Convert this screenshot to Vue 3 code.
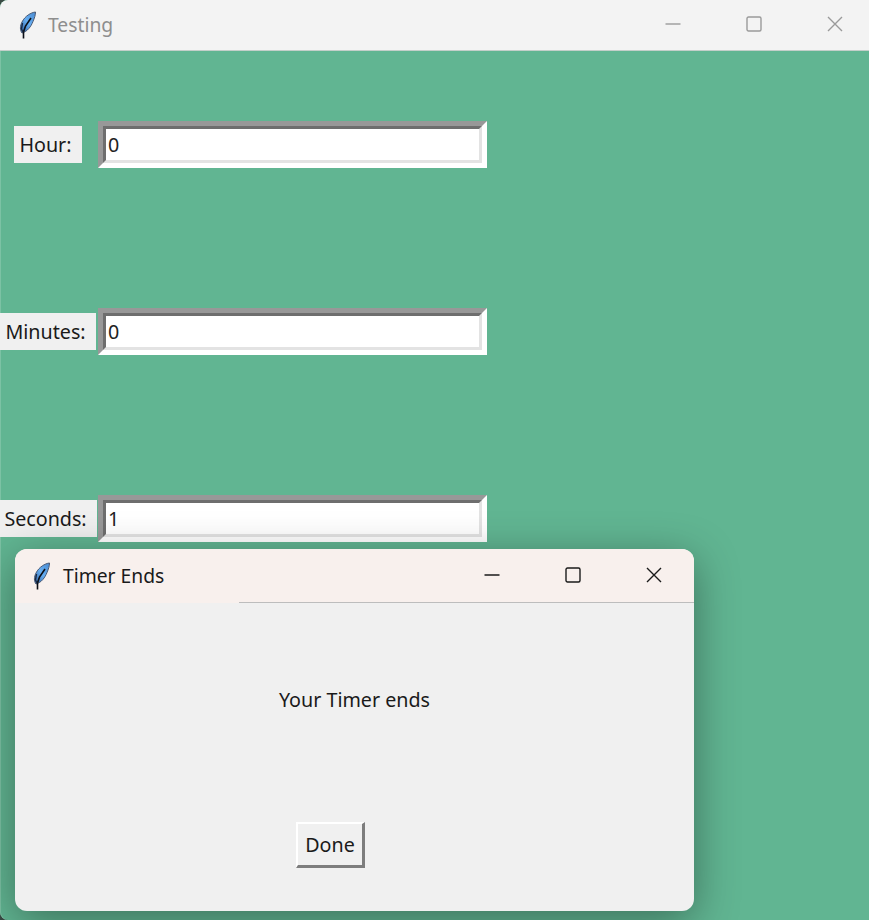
<script setup>
const rows = [
  { label: 'Hour:', value: '0' },
  { label: 'Minutes:', value: '0' },
  { label: 'Seconds:', value: '1' },
]
</script>

<template>
  <div class="screen">
    <svg width="0" height="0" class="defs">
      <defs>
        <linearGradient id="plume" x1="1" y1="0" x2="0" y2="1">
          <stop offset="0" stop-color="#4a8ad0" />
          <stop offset="0.5" stop-color="#66aef2" />
          <stop offset="1" stop-color="#2e5c9e" />
        </linearGradient>
      </defs>
    </svg>

    <section class="main">
      <header class="titlebar">
        <svg class="feather" viewBox="0 0 18 28">
          <path d="M16.500 1C12 1.500 6 5 3 11 1 15 .8 19 3 22 8.500 20.500 12 15.500 14 10.500 15.500 7 16.500 4 16.500 1Z" fill="url(#plume)" stroke="#4a5a75" stroke-width="1" />
          <path d="M12 7 6.500 15 4.500 21 4.500 27.500" fill="none" stroke="#0c0f16" stroke-width="1.600" />
          <path d="M3.500 12 2.500 18 4 21" fill="none" stroke="#1b2a44" stroke-width="1.400" />
        </svg>
        <span class="title muted">Testing</span>
        <div class="controls muted-icons">
          <svg viewBox="0 0 16 16"><path d="M0.500 8H15.500" /></svg>
          <svg viewBox="0 0 16 16"><rect x="1" y="1" width="14" height="14" rx="1.500" /></svg>
          <svg viewBox="0 0 16 16"><path d="M1 1 15 15M15 1 1 15" /></svg>
        </div>
      </header>

      <div class="form">
        <div v-for="row in rows" :key="row.label" class="row">
          <label class="field-label">{{ row.label }}</label>
          <div class="entry">
            <div class="entry-inner">{{ row.value }}</div>
          </div>
        </div>
      </div>
    </section>

    <section class="dialog">
      <header class="dialog-bar">
        <svg class="feather dialog-feather" viewBox="0 0 18 28">
          <path d="M16.500 1C12 1.500 6 5 3 11 1 15 .8 19 3 22 8.500 20.500 12 15.500 14 10.500 15.500 7 16.500 4 16.500 1Z" fill="url(#plume)" stroke="#4a5a75" stroke-width="1" />
          <path d="M12 7 6.500 15 4.500 21 4.500 27.500" fill="none" stroke="#0c0f16" stroke-width="1.600" />
          <path d="M3.500 12 2.500 18 4 21" fill="none" stroke="#1b2a44" stroke-width="1.400" />
        </svg>
        <span class="title">Timer Ends</span>
        <div class="controls dialog-icons">
          <svg viewBox="0 0 16 16"><path d="M0.500 8H15.500" /></svg>
          <svg viewBox="0 0 16 16"><rect x="1" y="1" width="14" height="14" rx="1.500" /></svg>
          <svg viewBox="0 0 16 16"><path d="M1 1 15 15M15 1 1 15" /></svg>
        </div>
      </header>
      <div class="dialog-body">
        <p class="message">Your Timer ends</p>
        <button class="done" type="button">Done</button>
      </div>
    </section>
  </div>
</template>

<style>
html, body { margin: 0; background: #3a4a44; }
</style>

<style scoped>
.defs { position: absolute; }
.screen {
  position: relative;
  width: 869px;
  height: 920px;
  overflow: hidden;
  font-family: "Noto Sans", "Open Sans", sans-serif;
  font-size: 19.700px;
  color: #1a1a1a;
}
.main {
  height: 920px;
  background: #61b592;
  border-top-left-radius: 8px;
  border-bottom-left-radius: 8px;
  overflow: hidden;
  box-shadow: inset 1px 0 0 #7cc2a4;
}
.titlebar {
  height: 51px;
  box-sizing: border-box;
  display: flex;
  align-items: center;
  padding-left: 19px;
  background: #f3f3f3;
  border-bottom: 1px solid #c4cfca;
}
.feather { width: 18px; height: 28px; flex: none; margin-right: 11px; }
.title { font-size: 19.300px; line-height: 1; }
.muted { color: #8e8e8e; }
.controls {
  margin-left: auto;
  display: flex;
  gap: 65px;
  padding-right: 26px;
  margin-bottom: 3px;
}
.controls svg { width: 16px; height: 16px; display: block; fill: none; stroke-width: 1.400; }
.muted-icons svg { stroke: #9a9a9a; }
.dialog-icons svg { stroke: #1a1a1a; }
.form {
  display: flex;
  flex-direction: column;
  gap: 140px;
  padding-top: 70px;
}
.row {
  display: grid;
  grid-template-columns: 96px 389px;
  column-gap: 2px;
  align-items: center;
  justify-items: center;
}
.field-label {
  height: 37px;
  line-height: 37px;
  padding: 0 10px 0 5px;
  background: #f0f0f0;
  white-space: nowrap;
}
.entry {
  width: 389px;
  height: 47px;
  box-sizing: border-box;
  border: 5px solid;
  border-color: #989898 #ffffff #ffffff #989898;
}
.entry-inner {
  height: 100%;
  box-sizing: border-box;
  border: 3px solid;
  border-color: #6e6e6e #e3e3e3 #e3e3e3 #6e6e6e;
  background: #ffffff;
  line-height: 31px;
  padding-left: 2px;
  color: #222;
}
.dialog {
  position: absolute;
  left: 15px;
  top: 549px;
  width: 679px;
  height: 362px;
  border-radius: 12px;
  background: #f0f0f0;
  overflow: hidden;
  box-shadow: 0 10px 44px rgba(0, 0, 0, 0.38);
}
.dialog-bar {
  height: 54px;
  box-sizing: border-box;
  display: flex;
  align-items: center;
  padding-left: 18px;
  background: #f8f0ed;
  position: relative;
}
.dialog-bar::after {
  content: "";
  position: absolute;
  left: 224px;
  right: 0;
  bottom: 0;
  height: 1px;
  background: #bdbdbd;
}
.dialog-feather { margin-right: 12px; }
.dialog-icons { padding-right: 32px; }
.dialog-body {
  display: flex;
  flex-direction: column;
  align-items: center;
  height: 308px;
}
.message { margin: 84px 0 0; line-height: 26px; }
.done {
  margin-top: 109px;
  margin-right: 48px;
  width: 69px;
  height: 46px;
  box-sizing: border-box;
  padding: 0;
  font: inherit;
  color: inherit;
  background: #f0f0f0;
  border-style: solid;
  border-width: 2px 3px 3px 2px;
  border-color: #ffffff #7d7d7d #7d7d7d #ffffff;
}
</style>
